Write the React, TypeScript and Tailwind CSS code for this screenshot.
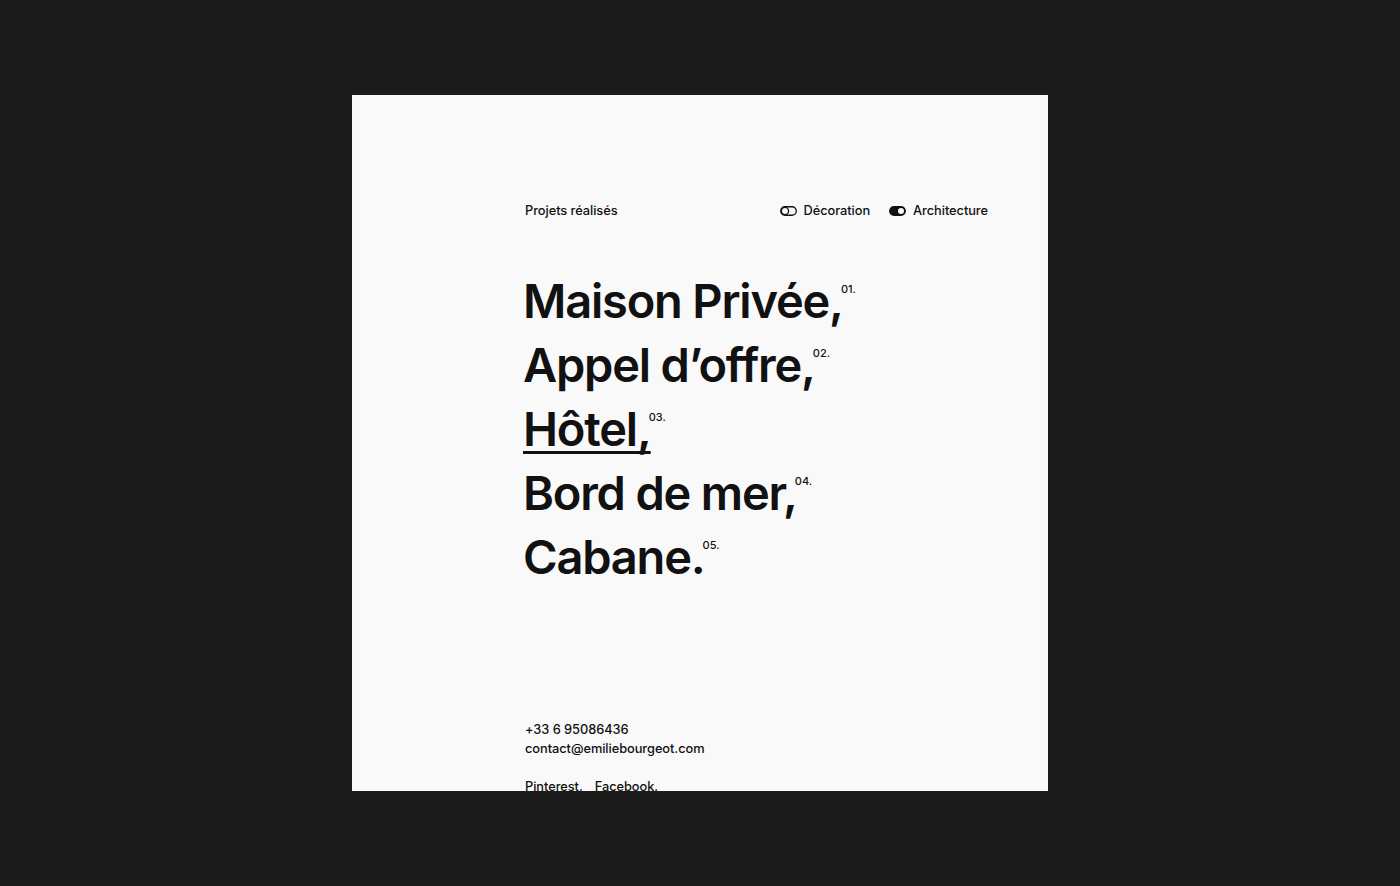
import React from "react";

const projects = [
  { name: "Maison Privée,", num: "01." },
  { name: "Appel d’offre,", num: "02." },
  { name: "Hôtel,", num: "03.", active: true },
  { name: "Bord de mer,", num: "04." },
  { name: "Cabane.", num: "05." },
];

function Toggle({ on }: { on?: boolean }) {
  return (
    <svg width="17" height="10" viewBox="0 0 17 10" className="shrink-0">
      <rect
        x="0.75"
        y="0.75"
        width="15.5"
        height="8.5"
        rx="4.25"
        fill={on ? "#111" : "none"}
        stroke="#111"
        strokeWidth="1.3"
      />
      {on ? (
        <circle cx="12" cy="5" r="3" fill="#f9f9f9" />
      ) : (
        <circle cx="5" cy="5" r="3.6" fill="none" stroke="#111" strokeWidth="1.3" />
      )}
    </svg>
  );
}

export default function App() {
  return (
    <div
      className="w-full h-[886px] bg-[#1b1b1b] flex items-center justify-center"
      style={{ fontFamily: "Inter, 'Liberation Sans', sans-serif" }}
    >
      <div className="w-[696px] h-[696px] bg-[#f9f9f9] overflow-hidden pl-[173px] pr-[60px] pt-[106px] text-[#111]">
        {/* header */}
        <div className="flex items-center justify-between text-[12.8px] font-medium leading-[20px] tracking-[-0.05px]">
          <span>Projets réalisés</span>
          <div className="flex items-center gap-[19px]">
            <span className="flex items-center gap-[7px]">
              <Toggle />
              Décoration
            </span>
            <span className="flex items-center gap-[7px]">
              <Toggle on />
              Architecture
            </span>
          </div>
        </div>

        {/* projects */}
        <ul className="mt-[48px] -ml-[2px]">
          {projects.map((p) => (
            <li key={p.num} className="h-[64px] leading-[64px] text-[47px] font-semibold tracking-[-1.2px]">
              <span
                className={
                  p.active
                    ? "underline decoration-[3px] underline-offset-[5px] [text-decoration-skip-ink:none]"
                    : ""
                }
              >
                {p.name}
              </span>
              <span className="relative top-[-12px] -ml-[2px] text-[11px] font-medium tracking-normal align-top leading-[64px]">
                {p.num}
              </span>
            </li>
          ))}
        </ul>

        {/* footer */}
        <div className="mt-[131px] text-[12.8px] font-medium leading-[19px] tracking-[-0.05px]">
          <p>+33 6 95086436</p>
          <p>contact@emiliebourgeot.com</p>
          <p className="mt-[19px] flex gap-[12px]">
            <span>Pinterest,</span>
            <span>Facebook,</span>
          </p>
        </div>
      </div>
    </div>
  );
}
